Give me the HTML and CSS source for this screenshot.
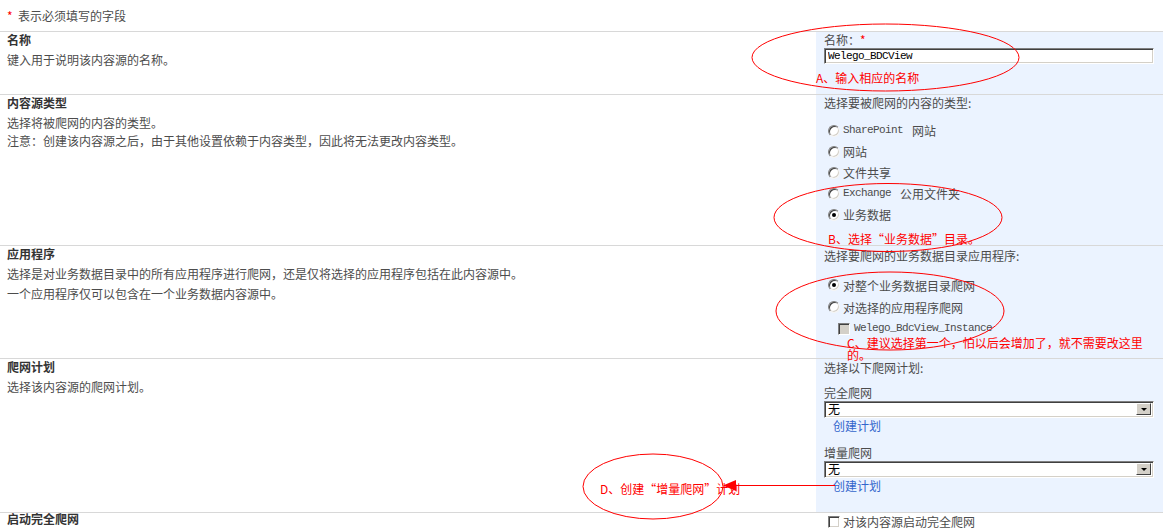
FILE: index.html
```html
<!DOCTYPE html>
<html>
<head>
  <title>添加内容源</title>
  <link rel="stylesheet" href="styles.css">
</head>
<body>
  <div class="page">
    <div class="required-note"><span class="star">*</span>表示必须填写的字段</div>

    <div class="section s-name">
      <div class="section-info">
        <h3>名称</h3>
        <p>键入用于说明该内容源的名称。</p>
      </div>
      <div class="section-field">
        <div class="field-label">名称：<span class="star">*</span></div>
        <input type="text" class="text-input" value="Welego_BDCView">
      </div>
    </div>

    <div class="section s-type">
      <div class="section-info">
        <h3>内容源类型</h3>
        <p>选择将被爬网的内容的类型。</p>
        <p>注意：创建该内容源之后，由于其他设置依赖于内容类型，因此将无法更改内容类型。</p>
      </div>
      <div class="section-field">
        <div class="field-label">选择要被爬网的内容的类型:</div>
        <div class="option-list">
          <div class="option"><span class="radio"></span><span class="latin">SharePoint </span>网站</div>
          <div class="option"><span class="radio"></span>网站</div>
          <div class="option"><span class="radio"></span>文件共享</div>
          <div class="option"><span class="radio"></span><span class="latin">Exchange </span>公用文件夹</div>
          <div class="option"><span class="radio checked"></span>业务数据</div>
        </div>
      </div>
    </div>

    <div class="section s-app">
      <div class="section-info">
        <h3>应用程序</h3>
        <p>选择是对业务数据目录中的所有应用程序进行爬网，还是仅将选择的应用程序包括在此内容源中。</p>
        <p>一个应用程序仅可以包含在一个业务数据内容源中。</p>
      </div>
      <div class="section-field">
        <div class="field-label">选择要爬网的业务数据目录应用程序:</div>
        <div class="option-list">
          <div class="option tall"><span class="radio checked"></span>对整个业务数据目录爬网</div>
          <div class="option tall"><span class="radio"></span>对选择的应用程序爬网</div>
          <div class="option sub"><span class="checkbox disabled"></span><span class="latin">Welego_BdcView_Instance</span></div>
        </div>
      </div>
    </div>

    <div class="section s-schedule">
      <div class="section-info">
        <h3>爬网计划</h3>
        <p>选择该内容源的爬网计划。</p>
      </div>
      <div class="section-field">
        <div class="field-label">选择以下爬网计划:</div>
        <div class="schedule">
          <div class="field-label">完全爬网</div>
          <div class="select"><span class="select-value">无</span><span class="select-btn"></span></div>
          <a class="link" href="#">创建计划</a>
        </div>
        <div class="schedule">
          <div class="field-label">增量爬网</div>
          <div class="select"><span class="select-value">无</span><span class="select-btn"></span></div>
          <a class="link" href="#">创建计划</a>
        </div>
      </div>
    </div>

    <div class="section s-start">
      <div class="section-info">
        <h3>启动完全爬网</h3>
      </div>
      <div class="section-field plain">
        <div class="option short"><span class="checkbox"></span>对该内容源启动完全爬网</div>
      </div>
    </div>

    <!-- annotations drawn over the screenshot -->
    <div class="note note-a">A、输入相应的名称</div>
    <div class="note note-b">B、选择“业务数据”目录。</div>
    <div class="note note-c">C、建议选择第一个，怕以后会增加了，就不需要改这里<br>的。</div>
    <div class="note note-d">D、创建“增量爬网”计划</div>
    <svg class="marks" width="1163" height="530" viewBox="0 0 1163 530">
      <ellipse cx="885.5" cy="57.5" rx="133.5" ry="33.5" />
      <ellipse cx="888" cy="217.5" rx="114" ry="34" />
      <ellipse cx="890" cy="311" rx="114" ry="39" />
      <ellipse cx="653" cy="486.5" rx="70" ry="32.5" />
      <line x1="734" y1="485.5" x2="835" y2="485.5" />
      <polygon points="723,485.5 736,480 736,491" />
    </svg>
  </div>
</body>
</html>
```

FILE: styles.css
```css
body {
  margin: 0;
  font-family: "Noto Sans CJK SC", "Liberation Sans", sans-serif;
  font-size: 12px;
  color: #4c4c4c;
  background-color: #fff;
}

.page {
  position: relative;
  width: 1163px;
  height: 530px;
  overflow: hidden;
}

.star {
  color: #ff0000;
}

.required-note {
  height: 31px;
  box-sizing: border-box;
  padding: 8px 7px 0;
  line-height: 15px;
}

.required-note .star {
  display: inline-block;
  width: 11px;
}

.section {
  display: grid;
  grid-template-columns: 816px 1fr;
  border-top: 1px solid #d8d8d8;
}

.s-name { height: 62px; }
.s-type { height: 150px; }
.s-app { height: 112px; }
.s-schedule { height: 153px; }
.s-start { height: 40px; }

.section-info {
  padding: 0 7px;
}

.section-info h3 {
  margin: 0;
  font-size: 12px;
  line-height: 15px;
  font-weight: bold;
  color: #333;
}

.section-info p {
  margin: 5px 0 0;
  line-height: 15px;
}

.s-type .section-info p + p {
  margin-top: 3px;
}

.s-start .section-info h3 {
  line-height: 12px;
}

.section-field {
  background-color: #ebf3ff;
  padding: 0 9px 0 8px;
  line-height: 15px;
}

.section-field.plain {
  background-color: #fff;
}

.s-app .section-field {
  padding-top: 2px;
}

.s-schedule .section-field {
  padding-top: 1px;
}

.text-input {
  display: block;
  box-sizing: border-box;
  width: 330px;
  height: 16px;
  margin: 1px 0 0;
  padding: 0 3px;
  font-family: "Liberation Mono", monospace;
  font-size: 11px;
  letter-spacing: -0.6px;
  color: #000;
  background: #fff;
  border: 1px solid;
  border-color: #808080 #fff #fff #808080;
  box-shadow: inset 1px 1px 0 #404040, inset -1px -1px 0 #d4d0c8;
  outline: none;
}

.latin {
  font-family: "Liberation Mono", monospace;
  font-size: 11px;
  letter-spacing: -0.6px;
  white-space: pre;
}

.option-list {
  margin-top: 10px;
}

.s-app .option-list {
  margin-top: 11px;
}

.option {
  display: flex;
  align-items: center;
  height: 21px;
  gap: 3px;
}

.option.tall {
  height: 22px;
}

.option.short {
  height: 17px;
}

.option.sub {
  padding-left: 14px;
  gap: 4px;
}

.radio {
  position: relative;
  box-sizing: border-box;
  width: 12px;
  height: 12px;
  margin-left: 4px;
  border-radius: 50%;
  background: #fff;
  border: 1px solid;
  border-color: #808080 #f4f4f4 #f4f4f4 #808080;
  box-shadow: inset 1px 1px 0 #404040, inset -1px -1px 0 #d4d0c8;
}

.radio.checked::after {
  content: "";
  position: absolute;
  left: 3px;
  top: 3px;
  width: 4px;
  height: 4px;
  border-radius: 50%;
  background: #000;
}

.checkbox {
  box-sizing: border-box;
  width: 12px;
  height: 12px;
  margin-left: 4px;
  background: #fff;
  border: 1px solid;
  border-color: #808080 #fff #fff #808080;
  box-shadow: inset 1px 1px 0 #404040, inset -1px -1px 0 #d4d0c8;
}

.option.sub .checkbox {
  margin-left: 0;
}

.checkbox.disabled {
  background: #d4d0c8;
}

.schedule .field-label {
  margin-top: 10px;
}

.schedule + .schedule .field-label {
  margin-top: 12px;
}

.select {
  display: flex;
  box-sizing: border-box;
  width: 330px;
  height: 17px;
  margin-top: 1px;
  background: #fff;
  border: 1px solid;
  border-color: #808080 #fff #fff #808080;
  box-shadow: inset 1px 1px 0 #404040, inset -1px -1px 0 #d4d0c8;
  padding: 1px 2px 2px 1px;
}

.select-value {
  flex: 1;
  padding-left: 2px;
  line-height: 12px;
  color: #000;
}

.select-btn {
  position: relative;
  box-sizing: border-box;
  width: 15px;
  height: 12px;
  background: #d4d0c8;
  border: 1px solid;
  border-color: #fff #404040 #404040 #fff;
}

.select-btn::after {
  content: "";
  position: absolute;
  left: 4px;
  top: 4px;
  border-left: 3px solid transparent;
  border-right: 3px solid transparent;
  border-top: 3px solid #000;
}

.link {
  display: block;
  padding-left: 9px;
  color: #3366cc;
  text-decoration: none;
}

.note {
  position: absolute;
  color: #ff0000;
  line-height: 15px;
  white-space: nowrap;
}

.note-a { left: 816px; top: 70px; }
.note-b { left: 828px; top: 231px; }
.note-c { left: 847px; top: 337px; line-height: 12px; }
.note-d { left: 600px; top: 481px; }

.marks {
  position: absolute;
  left: 0;
  top: 0;
  pointer-events: none;
}

.marks ellipse,
.marks line {
  fill: none;
  stroke: #ff0000;
  stroke-width: 1;
}

.marks polygon {
  fill: #ff0000;
}
```
